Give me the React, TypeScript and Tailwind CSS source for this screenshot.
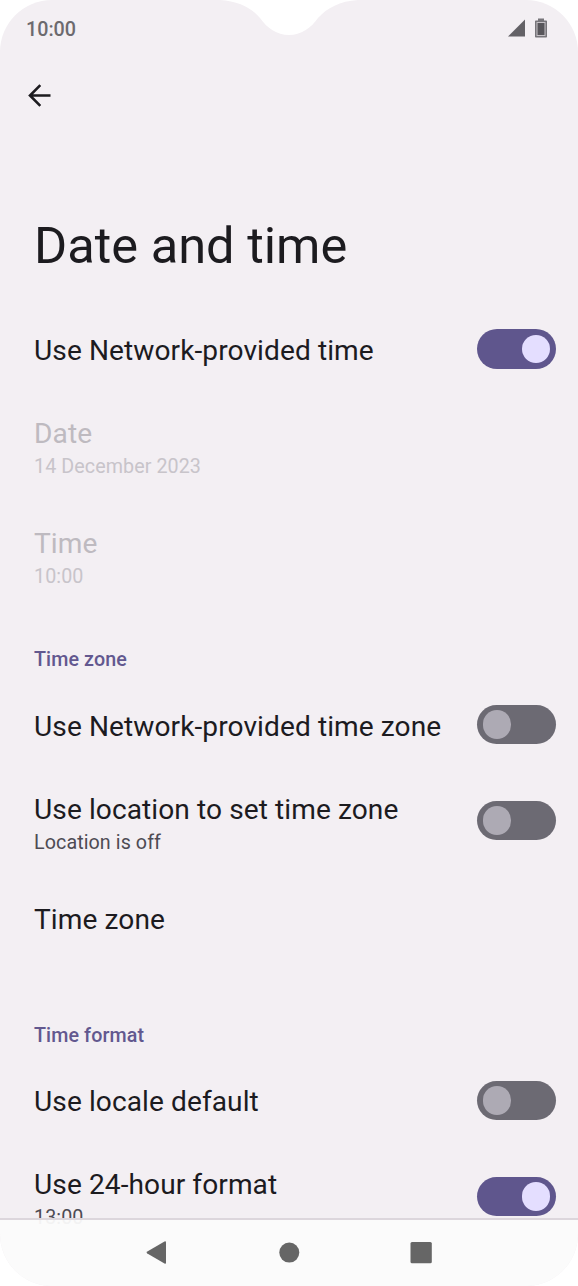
import React from "react";

function Switch({ on }: { on: boolean }) {
  return (
    <span
      role="switch"
      aria-checked={on}
      className={`flex h-[39.5px] w-[78.5px] shrink-0 items-center rounded-full px-[5.5px] ${
        on ? "justify-end bg-[#5f568d]" : "justify-start bg-[#6c6a73]"
      }`}
    >
      <span className={`size-[28.5px] rounded-full ${on ? "bg-[#e4deff]" : "bg-[#adaab4]"}`} />
    </span>
  );
}

interface RowProps {
  title: string;
  summary?: string;
  on?: boolean;
  disabled?: boolean;
  tall?: boolean;
}

function Row({ title, summary, on, disabled, tall }: RowProps) {
  const big = tall || summary !== undefined;
  return (
    <div className={`flex shrink-0 items-start justify-between pr-[22.5px] pl-[34px] ${big ? "h-[110px]" : "h-[84px]"}`}>
      <div className={big ? "pt-[25px]" : "pt-[26px]"}>
        <div
          className={`text-[28.1px] leading-[34px] tracking-[0.08px] whitespace-nowrap ${
            disabled ? "text-[#bebac0]" : "text-[#1c1b1f]"
          }`}
        >
          {title}
        </div>
        {summary !== undefined && (
          <div
            className={`mt-[3px] text-[19.7px] leading-[25px] tracking-[0.08px] whitespace-nowrap ${
              disabled ? "text-[#c8c4ca]" : "text-[#4e4b53]"
            }`}
          >
            {summary}
          </div>
        )}
      </div>
      {on !== undefined && (
        <div className={big ? "pt-[33.3px]" : "pt-[21.3px]"}>
          <Switch on={on} />
        </div>
      )}
    </div>
  );
}

function Section({ children }: { children: string }) {
  return (
    <div className="h-[71.7px] shrink-0 pt-[36px] pl-[34px] text-[19.7px] leading-[24px] font-medium tracking-[0.1px] text-[#62588f]">
      {children}
    </div>
  );
}

export default function App() {
  return (
    <div className="h-[1286px] w-[578px] overflow-hidden bg-white font-[Roboto,sans-serif]">
      <div className="relative flex h-full flex-col overflow-hidden rounded-[52px] bg-[#f3eff3]">
        <svg className="absolute top-0 left-[220px]" width="138" height="36" viewBox="0 0 138 36">
          <path d="M0 0C18 1 32 8 40 18C47 28 57 35 69 35C81 35 91 28 98 18C107 8 120 1 138 0Z" fill="#fff" />
        </svg>
        <header className="flex h-[58px] shrink-0 items-center justify-between pr-[31px] pl-[26px]">
          <span className="pt-[2px] text-[19.7px] leading-[24px] font-medium text-[#6c6a6e]">10:00</span>
          <span className="flex items-center gap-[10px] pb-[2px]">
            <svg width="17" height="18" viewBox="0 0 17 18">
              <path d="M17 0.5V17.5H0Z" fill="#636166" />
            </svg>
            <svg width="12" height="20" viewBox="0 0 12 20">
              <path d="M3 0.5h6v2h2.2q.8 0 .8.8v15.4q0 .8-.8.8H.8q-.8 0-.8-.8V3.300q0-.8.8-.8H3Z" fill="#77757a" />
              <rect x="2" y="4.500" width="8" height="13" fill="#58565b" stroke="#c5c1c6" strokeWidth="1" />
            </svg>
          </span>
        </header>
        <div className="flex h-[76px] shrink-0 items-center pb-[2px] pl-[28px]">
          <svg width="23" height="23" viewBox="0 0 23 23" fill="none" stroke="#1c1b1f" strokeWidth="2.600">
            <path d="M22.500 11.500H2M12.300 1.200L2 11.500L12.300 21.800" />
          </svg>
        </div>
        <h1 className="h-[174px] shrink-0 pt-[82px] pl-[34px] text-[50.6px] leading-[60px] whitespace-nowrap text-[#1c1b1f]">
          Date and time
        </h1>
        <main className="flex min-h-0 flex-1 flex-col overflow-hidden">
          <Row title="Use Network-provided time" on={true} />
          <Row title="Date" summary="14 December 2023" disabled />
          <Row title="Time" summary="10:00" disabled />
          <Section>Time zone</Section>
          <Row title="Use Network-provided time zone" on={false} />
          <Row title="Use location to set time zone" summary="Location is off" on={false} />
          <Row title="Time zone" tall />
          <Section>Time format</Section>
          <Row title="Use locale default" on={false} />
          <Row title="Use 24-hour format" summary="13:00" on={true} />
        </main>
        <nav className="relative -mt-[68px] h-[68px] shrink-0 border-t-2 border-[#dcd6dc] bg-[#fbfbfb]/95 bg-clip-padding">
          <svg className="block" width="578" height="66" viewBox="0 1220 578 66" fill="#666">
            <path d="M147.300 1251.600L164.500 1241.500Q166 1240.800 166 1242.400V1262.800Q166 1264.400 164.500 1263.600L147.300 1253.600Q145.700 1252.600 147.300 1251.600Z" />
            <circle cx="289.300" cy="1252.600" r="10" />
            <rect x="410.500" y="1242" width="21.300" height="21.300" rx="1.500" />
          </svg>
        </nav>
      </div>
    </div>
  );
}
